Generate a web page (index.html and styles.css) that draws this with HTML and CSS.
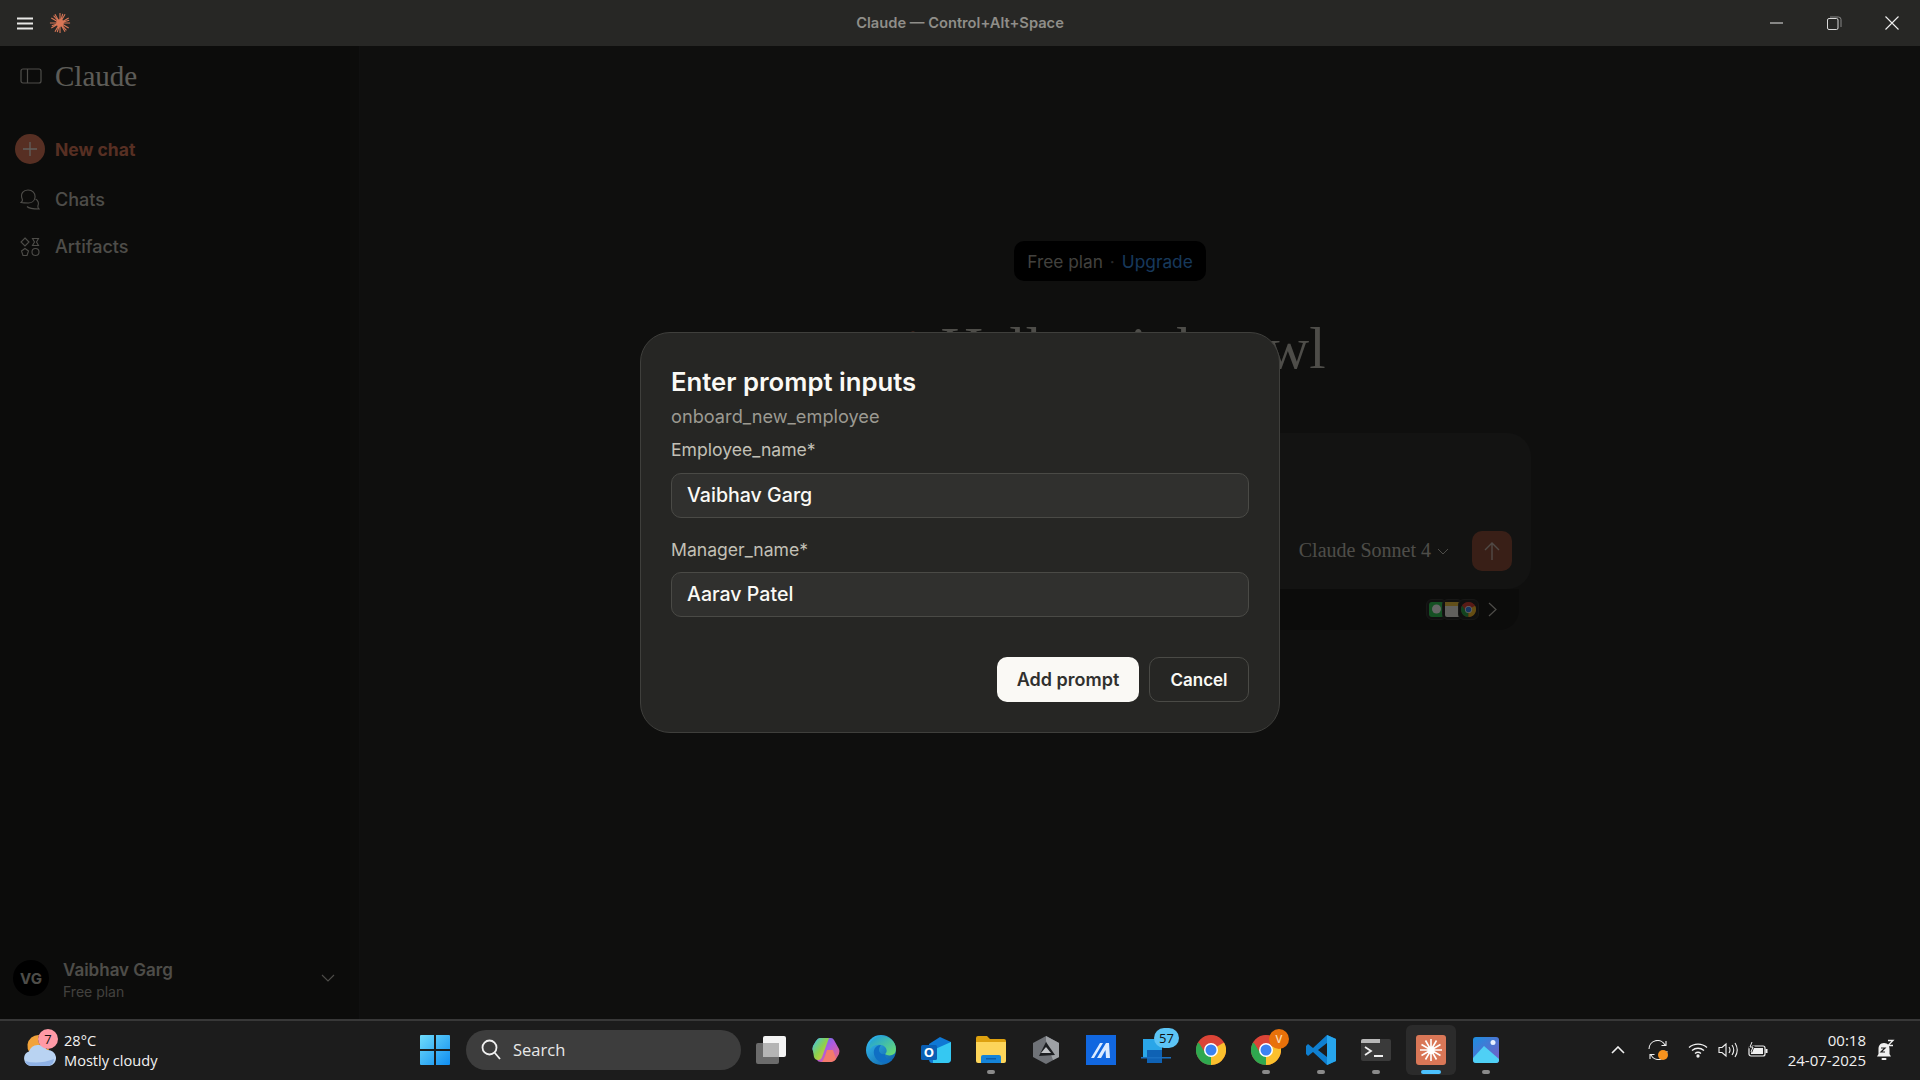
FILE: index.html
```html
<!DOCTYPE html>
<html lang="en">

<head>
    <meta charset="UTF-8">
    <title>Claude</title>
    <link rel="stylesheet" href="styles.css">
</head>

<body>
    <header class="titlebar">
        <div class="titlebar-left">
            <svg class="menu-icon" width="16" height="13" viewBox="0 0 16 13"><path d="M0 1.5H16M0 6.5H16M0 11.5H16" stroke="#e8e8e6" stroke-width="2"/></svg>
            <svg class="spark" width="22" height="22" viewBox="0 0 24 24"><path d="M12 12L12 1M12 12L17.5 2.5M12 12L21.5 6.5M12 12L23 12M12 12L21.5 17.5M12 12L17.5 21.5M12 12L12 23M12 12L6.5 21.5M12 12L2.5 17.5M12 12L1 12M12 12L2.5 6.5M12 12L6.5 2.5M12 12L15 2M12 12L22 9M12 12L19 20M12 12L9 22M12 12L3 15M12 12L5 4" stroke="#d97757" stroke-width="1.2"/><circle cx="12" cy="12" r="4" fill="#d97757"/></svg>
        </div>
        <div class="titlebar-title">Claude — Control+Alt+Space</div>
        <div class="window-controls">
            <svg width="14" height="14" viewBox="0 0 14 14"><path d="M0 7H13" stroke="#e6e6e6" stroke-width="1"/></svg>
            <svg width="15" height="15" viewBox="0 0 15 15" fill="none"><rect x="0.5" y="2.5" width="10.5" height="11" rx="1.5" stroke="#d8d8d8"/><path d="M3 1H11.5Q14 1 14 3.5V11" stroke="#888"/></svg>
            <svg width="14" height="14" viewBox="0 0 14 14"><path d="M0.5 0.5L13.5 13.5M13.5 0.5L0.5 13.5" stroke="#f0f0f0" stroke-width="1.1"/></svg>
        </div>
    </header>

    <div class="app">
        <aside class="sidebar">
            <div class="brand">
                <svg width="22" height="16" viewBox="0 0 22 16" fill="none"><rect x="1" y="1" width="20" height="14" rx="2" stroke="#c2c0b6" stroke-width="1.2"/><path d="M7.5 1V15" stroke="#c2c0b6" stroke-width="1.2"/></svg>
                <span class="brand-name">Claude</span>
            </div>
            <nav class="nav">
                <div class="nav-item new-chat">
                    <span class="plus-circle"><svg width="16" height="16" viewBox="0 0 16 16"><path d="M8 1V15M1 8H15" stroke="#f0eee6" stroke-width="1.3"/></svg></span>
                    <span>New chat</span>
                </div>
                <div class="nav-item">
                    <span class="nav-icon"><svg width="20" height="21" viewBox="0 0 20 21" fill="none" stroke="#c2c0b6" stroke-width="1.1"><path d="M1 13.5Q3 12 2.200 10C0 4.500 3.500 1 8 1C12.500 1 15.500 4 15 8.500C14.500 12 11.500 14.200 8 14C5.500 14 3.500 14 1 13.500Z"/><path d="M7 17.500C9 19.500 15 20 19 20Q17.500 18.500 18 16.500C19 14 18 11 15.500 10"/></svg></span>
                    <span>Chats</span>
                </div>
                <div class="nav-item">
                    <span class="nav-icon"><svg width="20" height="20" viewBox="0 0 20 20" fill="none" stroke="#c2c0b6" stroke-width="1.1"><path d="M5 1L9 5L5 9L1 5Z"/><path d="M12.500 1.500H18.500L16.500 5L18.500 8.500H12.500L14.500 5Z"/><path d="M5 11.500L8.500 14L7 18.500H3L1.500 14Z"/><circle cx="15.500" cy="15" r="3.500"/></svg></span>
                    <span>Artifacts</span>
                </div>
            </nav>
            <div class="account">
                <span class="avatar">VG</span>
                <div class="account-text">
                    <div class="account-name">Vaibhav Garg</div>
                    <div class="account-plan">Free plan</div>
                </div>
                <svg width="14" height="8" viewBox="0 0 14 8" fill="none"><path d="M1 1L7 7L13 1" stroke="#c2c0b6" stroke-width="1.1"/></svg>
            </div>
        </aside>

        <main class="main">
            <div class="plan-badge">Free plan <span class="dot">·</span> <span class="upgrade">Upgrade</span></div>
            <h1 class="greeting">
                <svg width="38" height="38" viewBox="0 0 24 24"><path d="M12 12L12 1M12 12L17.500 2.500M12 12L21.500 6.500M12 12L23 12M12 12L21.500 17.500M12 12L17.500 21.500M12 12L12 23M12 12L6.500 21.500M12 12L2.500 17.500M12 12L1 12M12 12L2.500 6.500M12 12L6.500 2.500" stroke="#d97757" stroke-width="1.800"/></svg>
                <span>Hello, night owl</span>
            </h1>
            <div class="composer">
                <div class="composer-row">
                    <span class="model">Claude Sonnet 4</span>
                    <svg width="12" height="7" viewBox="0 0 12 7" fill="none"><path d="M1 1L6 6L11 1" stroke="#c2c0b6"/></svg>
                    <span class="send"><svg width="16" height="20" viewBox="0 0 16 20" fill="none"><path d="M8 19V2M1 9L8 2L15 9" stroke="#c9b8b0" stroke-width="1.400"/></svg></span>
                </div>
            </div>
            <div class="tools-tray">
                <span class="tool-chips">
                    <span class="chip"><svg width="15" height="15" viewBox="0 0 15 15"><rect width="15" height="15" rx="3" fill="#34c759"/><circle cx="7.500" cy="7" r="4.500" fill="#fff"/></svg></span>
                    <span class="chip"><svg width="15" height="15" viewBox="0 0 15 15"><rect width="15" height="15" rx="2" fill="#f2f0e8"/><rect width="15" height="4" fill="#f5c542"/></svg></span>
                    <span class="chip"><svg width="15" height="15" viewBox="0 0 30 30"><circle cx="15" cy="15" r="15" fill="#db4437"/><path d="M15 15L2 7.500A15 15 0 0 0 15 30Z" fill="#2fa84f"/><path d="M15 15V30A15 15 0 0 0 28 7.500Z" fill="#fbc02d"/><path d="M2.500 7L8 16L15 8H28A15 15 0 0 0 2.500 7Z" fill="#db4437"/><circle cx="15" cy="15" r="7" fill="#fff"/><circle cx="15" cy="15" r="5.500" fill="#3b82f0"/></svg></span>
                </span>
                <svg width="9" height="15" viewBox="0 0 9 15" fill="none"><path d="M1 1L8 7.500L1 14" stroke="#c2c0b6" stroke-width="1.200"/></svg>
            </div>
        </main>

        <div class="overlay">
            <section class="modal">
                <h2 class="modal-title">Enter prompt inputs</h2>
                <div class="modal-sub">onboard_new_employee</div>
                <div class="field-label">Employee_name*</div>
                <div class="field-box">Vaibhav Garg</div>
                <div class="field-label second">Manager_name*</div>
                <div class="field-box">Aarav Patel</div>
                <div class="modal-actions">
                    <button class="btn btn-primary">Add prompt</button>
                    <button class="btn btn-ghost">Cancel</button>
                </div>
            </section>
        </div>
    </div>

    <footer class="taskbar">
        <div class="weather">
            <svg class="weather-icon" width="34" height="36" viewBox="0 0 34 36"><path d="M17 3A11 11 0 1 0 27 17A10 10 0 0 1 17 3Z" fill="#f2a33a"/><path d="M9 34A7.500 7.500 0 0 1 7 19.500A10 10 0 0 1 25 18A8 8 0 0 1 27 34Z" fill="#b9d3f2"/><path d="M9 34A7.500 7.500 0 0 1 3 29Q16 33 32 27A8 8 0 0 1 27 34Z" fill="#8fb2e6"/></svg>
            <span class="weather-badge">7</span>
            <div>
                <div class="weather-temp">28°C</div>
                <div class="weather-desc">Mostly cloudy</div>
            </div>
        </div>

        <div class="task-center">
            <svg class="win-logo" width="30" height="30" viewBox="0 0 30 30"><defs><linearGradient id="winGrad" x1="0" y1="0" x2="1" y2="1"><stop offset="0" stop-color="#6fdcfb"/><stop offset="1" stop-color="#0f8df0"/></linearGradient></defs><path d="M1 0H14V14H0V1Q0 0 1 0ZM16 0H29Q30 0 30 1V14H16ZM0 16H14V30H1Q0 30 0 29ZM16 16H30V29Q30 30 29 30H16Z" fill="url(#winGrad)"/></svg>
            <div class="search">
                <svg width="20" height="21" viewBox="0 0 20 21" fill="none"><circle cx="8.500" cy="8.500" r="7" stroke="#f0f0f0" stroke-width="1.800"/><path d="M13.500 13.500L19 20" stroke="#f0f0f0" stroke-width="1.800"/></svg>
                <span>Search</span>
            </div>
            <div class="task-icons">
                <div class="task-item">
                    <svg width="30" height="28" viewBox="0 0 30 28"><rect x="0" y="7" width="23" height="21" rx="2" fill="#6b6b6b"/><rect x="7" y="0" width="23" height="21" rx="2" fill="#f4f4f4"/><rect x="7" y="7" width="16" height="14" fill="#b5b5b5"/></svg>
                </div>
                <div class="task-item">
                    <svg width="28" height="26" viewBox="0 0 28 26"><defs><linearGradient id="copA" x1="0" y1="0" x2="1" y2="1"><stop offset="0" stop-color="#38c6f0"/><stop offset=".5" stop-color="#8fd04a"/><stop offset="1" stop-color="#f6c33c"/></linearGradient><linearGradient id="copB" x1="0" y1="0" x2="1" y2="1"><stop offset="0" stop-color="#2f7ff0"/><stop offset=".5" stop-color="#b05be0"/><stop offset="1" stop-color="#f36a6a"/></linearGradient></defs><path d="M8 1H19Q21 1 22 3L27 12Q28 14 27 17L24 22Q22 25 19 25H9Q6 25 5 23L1 14Q0 12 1 9L4 4Q6 1 8 1Z" fill="url(#copB)"/><path d="M8 1H17L10 20Q9 23 6 23Q3 23 2 20L1 14Q0 12 1 9L4 4Q6 1 8 1Z" fill="url(#copA)"/><path d="M15 13L13 19Q12 22 10 25H19Q22 25 24 22L21 13Z" fill="#f47b6c"/></svg>
                </div>
                <div class="task-item">
                    <svg width="30" height="30" viewBox="0 0 30 30"><defs><linearGradient id="edgeA" x1="0" y1="0" x2="1" y2="1"><stop offset="0" stop-color="#35c1f1"/><stop offset="1" stop-color="#0c59a4"/></linearGradient><linearGradient id="edgeB" x1="0" y1="0" x2="1" y2="1"><stop offset="0" stop-color="#1b9de2"/><stop offset="1" stop-color="#6fe06a"/></linearGradient></defs><circle cx="15" cy="15" r="15" fill="url(#edgeA)"/><path d="M4 8C8 1 18-1 25 4C30 8 31 14 29 18C27 21 21 21 19 19C22 17 21 11 15 10C10 9 6 11 4 14Z" fill="url(#edgeB)"/><path d="M19 19C16 20 13 18 13 15C13 13 14 11 15 10C9 10 6 16 9 22C12 28 21 30 26 25C22 25 19 23 19 19Z" fill="#0f6fc4"/></svg>
                </div>
                <div class="task-item">
                    <svg width="30" height="26" viewBox="0 0 30 26"><path d="M8 7L19 0L30 5V22Q30 26 26 26H11Q8 26 8 22Z" fill="#0f78d4"/><path d="M12 13L30 5V22Q30 26 26 26H12Z" fill="#35c8f2"/><rect x="0" y="8" width="16" height="15" rx="1.500" fill="#0a5fb4"/><text class="outlook-o" x="8" y="20" text-anchor="middle">O</text></svg>
                </div>
                <div class="task-item has-dot">
                    <svg width="30" height="27" viewBox="0 0 30 27"><path d="M0 2Q0 0 2 0H11L14 3H28Q30 3 30 5V10H0Z" fill="#dea10f"/><path d="M0 6H30V25Q30 27 28 27H2Q0 27 0 25Z" fill="#fdd55a"/><path d="M5 24V21Q5 19 7 19H23Q25 19 25 21V27H5Z" fill="#1584d8"/><rect x="10" y="22" width="10" height="1.500" fill="#0d5da8"/></svg>
                </div>
                <div class="task-item">
                    <svg width="26" height="28" viewBox="0 0 26 28"><path d="M13 0L26 7V21L13 28L0 21V7Z" fill="#6f7277"/><path d="M13 0L26 7V21L20 24L13 5Z" fill="#9ea1a5"/><path d="M13 6L22 19L6 20Z" fill="#1d1f22"/><path d="M13 11L18 17H8Z" fill="#c4c6c9"/></svg>
                </div>
                <div class="task-item">
                    <svg width="30" height="30" viewBox="0 0 30 30"><rect width="30" height="30" fill="#1167e0"/><path d="M5 23L14 8H17L8 23ZM11 23L20 8H23L24 23H20L19.500 15L15 23Z" fill="#dcebff"/></svg>
                </div>
                <div class="task-item">
                    <svg width="30" height="27" viewBox="0 0 30 27"><rect x="2" y="3" width="19" height="19" fill="#2aa6e8"/><rect x="6" y="14" width="15" height="13" fill="#0f62b4"/><rect x="0" y="21" width="30" height="1.500" fill="#1a6fc0"/></svg>
                    <span class="count-badge">57</span>
                </div>
                <div class="task-item">
                    <svg width="30" height="30" viewBox="0 0 30 30"><circle cx="15" cy="15" r="15" fill="#db4437"/><path d="M15 15L2 7.500A15 15 0 0 0 15 30Z" fill="#2fa84f"/><path d="M15 15V30A15 15 0 0 0 28 7.500Z" fill="#fbc02d"/><path d="M2.500 7L8 16L15 8H28A15 15 0 0 0 2.500 7Z" fill="#db4437"/><circle cx="15" cy="15" r="7" fill="#fff"/><circle cx="15" cy="15" r="5.500" fill="#3b82f0"/></svg>
                </div>
                <div class="task-item has-dot">
                    <svg width="30" height="30" viewBox="0 0 30 30"><circle cx="15" cy="15" r="15" fill="#db4437"/><path d="M15 15L2 7.500A15 15 0 0 0 15 30Z" fill="#2fa84f"/><path d="M15 15V30A15 15 0 0 0 28 7.500Z" fill="#fbc02d"/><path d="M2.500 7L8 16L15 8H28A15 15 0 0 0 2.500 7Z" fill="#db4437"/><circle cx="15" cy="15" r="7" fill="#fff"/><circle cx="15" cy="15" r="5.500" fill="#3b82f0"/></svg>
                    <span class="profile-badge">V</span>
                </div>
                <div class="task-item has-dot">
                    <svg width="30" height="30" viewBox="0 0 30 30"><path d="M21 0L30 4V26L21 30L7 17L2 21L0 19V11L2 9L7 13Z" fill="#0f7fd0"/><path d="M21 0L30 4V26L21 30Z" fill="#27a5ec"/><path d="M21 8L12 15L21 22Z" fill="#1c1c1c"/></svg>
                </div>
                <div class="task-item has-dot">
                    <svg width="30" height="22" viewBox="0 0 30 22"><rect width="30" height="22" rx="2" fill="#3a3a3a"/><path d="M2 0H19V4H0V2Q0 0 2 0Z" fill="#b8b8b8"/><path d="M4 8L10 12L4 16" fill="none" stroke="#f0f0f0" stroke-width="1.800"/><rect x="13" y="16" width="9" height="2" fill="#f0f0f0"/></svg>
                </div>
                <div class="task-item active">
                    <svg width="30" height="30" viewBox="0 0 30 30"><rect width="30" height="30" rx="3" fill="#d97757"/><path d="M15 15L15 4M15 15L20.500 5.500M15 15L24.500 9.500M15 15L26 15M15 15L24.500 20.500M15 15L20.500 24.500M15 15L15 26M15 15L9.500 24.500M15 15L5.500 20.500M15 15L4 15M15 15L5.500 9.500M15 15L9.500 5.500" stroke="#fff" stroke-width="1.600"/><circle cx="15" cy="15" r="3.500" fill="#fff"/></svg>
                </div>
                <div class="task-item has-dot">
                    <svg width="26" height="26" viewBox="0 0 26 26"><defs><linearGradient id="photoBg" x1="0" y1="0" x2="1" y2="1"><stop offset="0" stop-color="#1b8fe0"/><stop offset="1" stop-color="#7a5cc4"/></linearGradient></defs><rect width="26" height="26" rx="3" fill="url(#photoBg)"/><path d="M0 21L11 9L26 22V23Q26 26 23 26H3Q0 26 0 23Z" fill="#4fd0f5"/><circle cx="20" cy="5.500" r="2.500" fill="#e8f0ff"/></svg>
                </div>
            </div>
        </div>

        <div class="tray">
            <svg class="tray-caret" width="14" height="8" viewBox="0 0 14 8" fill="none"><path d="M1 7L7 1L13 7" stroke="#f0f0f0" stroke-width="1.600"/></svg>
            <span class="sync">
                <svg width="20" height="20" viewBox="0 0 20 20" fill="none" stroke="#eee" stroke-width="1.100"><path d="M1 9A8.500 8.500 0 0 1 17 5M18 1V5.500H13.500"/><path d="M19 11A8.500 8.500 0 0 1 3 15M2 19V14.500H6.500"/></svg>
                <span class="sync-dot"></span>
            </span>
            <svg class="tray-wifi" width="20" height="16" viewBox="0 0 20 16" fill="none" stroke="#f0f0f0" stroke-width="1.300"><path d="M1 5.500C6 1 14 1 19 5.500M4 8.500C7.500 5.500 12.500 5.500 16 8.500M7 11.500C8.800 10 11.200 10 13 11.500"/><circle cx="10" cy="14" r="1" fill="#f0f0f0"/></svg>
            <svg class="tray-vol" width="20" height="16" viewBox="0 0 20 16" fill="none" stroke="#f0f0f0" stroke-width="1.100"><path d="M1 5.500H4L8 2V14L4 10.500H1Z"/><path d="M11 5Q13 8 11 11M14 3Q17.500 8 14 13M17 1Q21.500 8 17 15"/></svg>
            <svg class="tray-batt" width="20" height="16" viewBox="0 0 20 16"><rect x="1" y="4" width="16" height="10" rx="2" fill="none" stroke="#f0f0f0" stroke-width="1.200"/><rect x="3" y="6" width="12" height="6" fill="#f0f0f0"/><rect x="17.500" y="7" width="2" height="4" fill="#f0f0f0"/><path d="M4 0L2 5H5L3 10" fill="none" stroke="#1c1c1c" stroke-width="2.500"/><path d="M4 0L2 5H5L3 10" fill="none" stroke="#f0f0f0" stroke-width="1"/></svg>
            <div class="clock">
                <div>00:18</div>
                <div>24-07-2025</div>
            </div>
            <svg class="tray-bell" width="19" height="22" viewBox="0 0 19 22"><path d="M8 4C4 4 2.500 7 2.500 10V15L1 17.500H15L13.500 15V10C13.500 7 12 4 8 4Z" fill="#f0f0f0"/><rect x="5.500" y="19" width="5" height="2" rx="1" fill="#f0f0f0"/><path d="M5 9H9L5 13H9" fill="none" stroke="#1c1c1c" stroke-width="1.200"/><path d="M12 1.500H17L12 6.500H17" fill="none" stroke="#f0f0f0" stroke-width="1.300"/></svg>
        </div>
    </footer>
</body>

</html>
```

FILE: styles.css
```css
* {
    box-sizing: border-box;
}

html,
body {
    height: 100%;
}

body {
    margin: 0;
    display: flex;
    flex-direction: column;
    width: 1920px;
    height: 1080px;
    overflow: hidden;
    font-family: Inter, "Noto Sans", sans-serif;
    background: #262624;
    color: #f0eee6;
}

/* title bar */
.titlebar {
    height: 46px;
    flex: none;
    background: #272725;
    position: relative;
    display: flex;
    align-items: center;
    justify-content: space-between;
}

.titlebar-left {
    display: flex;
    align-items: center;
    padding-left: 17px;
    gap: 16px;
}

.titlebar-title {
    position: absolute;
    left: 0;
    right: 0;
    text-align: center;
    font-size: 14.7px;
    font-weight: 600;
    color: #8f8e89;
}

.window-controls {
    display: flex;
    align-items: center;
    gap: 43px;
    padding-right: 21px;
}

/* app body */
.app {
    flex: 1;
    display: flex;
    position: relative;
    min-height: 0;
}

.sidebar {
    width: 360px;
    flex: none;
    background: #1f1e1d;
    border-right: 1px solid #2a2a28;
    display: flex;
    flex-direction: column;
}

.brand {
    display: flex;
    align-items: center;
    gap: 13px;
    height: 30px;
    margin: 15px 0 0 20px;
}

.brand-name {
    font-family: "Liberation Serif", serif;
    font-size: 29px;
    color: #e8e6dc;
}

.nav {
    margin-top: 43px;
}

.nav-item {
    display: flex;
    align-items: center;
    gap: 12px;
    height: 47px;
    padding-left: 17px;
    font-size: 18px;
    font-weight: 500;
    color: #c2c0b6;
}

.nav-item.new-chat {
    height: 30px;
    margin-bottom: 12px;
    padding-left: 15px;
    gap: 10px;
    font-size: 17.5px;
    font-weight: 700;
    color: #d97757;
}

.plus-circle {
    width: 30px;
    height: 30px;
    border-radius: 50%;
    background: #d97757;
    display: flex;
    align-items: center;
    justify-content: center;
}

.nav-icon {
    width: 26px;
    display: flex;
    justify-content: center;
}

.account {
    margin-top: auto;
    display: flex;
    align-items: center;
    height: 40px;
    margin-bottom: 21px;
    padding: 0 24px 0 13px;
}

.avatar {
    width: 36px;
    height: 36px;
    border-radius: 50%;
    background: #000;
    color: #c2c0b6;
    font-size: 15px;
    font-weight: 700;
    display: flex;
    align-items: center;
    justify-content: center;
    margin-right: 14px;
}

.account-text {
    flex: 1;
    position: relative;
    top: 3px;
}

.account-name {
    font-size: 17px;
    font-weight: 600;
    color: #c2c0b6;
    line-height: 22px;
}

.account-plan {
    font-size: 14px;
    color: #a6a49b;
    line-height: 22px;
}

/* main, dimmed behind the dialog */
.main {
    flex: 1;
    display: flex;
    flex-direction: column;
    align-items: center;
    padding: 195px 60px 0 0;
    background: #262624;
}

.plan-badge {
    height: 40px;
    width: 192px;
    display: flex;
    align-items: center;
    justify-content: center;
    gap: 7px;
    border-radius: 10px;
    background: #000;
    font-size: 17.3px;
    color: #a6a49b;
}

.dot {
    color: #666;
}

.upgrade {
    color: #3b8ee0;
}

.greeting {
    margin: 32px 0 0;
    display: flex;
    align-items: center;
    gap: 8px;
    height: 71px;
    font-family: "Liberation Serif", serif;
    font-size: 59px;
    font-weight: 400;
    color: #c2c0b6;
}

.composer {
    margin-top: 49px;
    width: 842px;
    height: 156px;
    border-radius: 24px;
    background: #30302e;
    position: relative;
    z-index: 1;
    display: flex;
    align-items: flex-end;
    justify-content: flex-end;
    padding: 0 19px 18px 0;
}

.composer-row {
    display: flex;
    align-items: center;
}

.model {
    font-family: "Liberation Serif", serif;
    font-size: 20px;
    color: #c2c0b6;
    margin-right: 6px;
    position: relative;
    top: -1px;
}

.send {
    width: 40px;
    height: 40px;
    border-radius: 10px;
    background: #8f4f3b;
    margin-left: 23px;
    display: flex;
    align-items: center;
    justify-content: center;
}

.tools-tray {
    width: 818px;
    height: 41px;
    border-radius: 0 0 20px 20px;
    background: #1f1e1d;
    display: flex;
    align-items: center;
    justify-content: flex-end;
    gap: 9px;
    padding-right: 22px;
}

.tool-chips {
    display: flex;
}

.chip {
    width: 21px;
    height: 21px;
    margin-left: -5px;
    border-radius: 6px;
    background: #2a2a28;
    border: 1px solid #3a3a38;
    display: flex;
    align-items: center;
    justify-content: center;
}

.overlay {
    position: absolute;
    inset: 0;
    background: rgba(0, 0, 0, 0.6);
    display: flex;
    align-items: center;
    justify-content: center;
    z-index: 2;
}

/* dialog */
.modal {
    width: 640px;
    height: 401px;
    background: #262624;
    border: 1px solid #3f3f3c;
    border-radius: 30px;
    padding: 34px 30px 30px;
    display: flex;
    flex-direction: column;
}

.modal-title {
    margin: 0;
    font-size: 25.7px;
    line-height: 30px;
    font-weight: 600;
    color: #faf9f5;
}

.modal-sub {
    margin-top: 7px;
    font-size: 18.2px;
    line-height: 24px;
    color: #9c9a92;
}

.field-label {
    margin-top: 10px;
    font-size: 17.6px;
    line-height: 24px;
    color: #c2c0b6;
}

.field-label.second {
    margin-top: 20px;
}

.field-box {
    margin-top: 11px;
    height: 45px;
    line-height: 43px;
    padding: 0 15px;
    background: #30302e;
    border: 1px solid #4a4a46;
    border-radius: 10px;
    font-size: 19.6px;
    font-weight: 500;
    color: #faf9f5;
}

.field-label.second + .field-box {
    margin-top: 10px;
}

.modal-actions {
    margin-top: 40px;
    display: flex;
    justify-content: flex-end;
    gap: 10px;
}

.btn {
    height: 45px;
    border-radius: 10px;
    font-family: inherit;
    font-size: 18px;
    font-weight: 600;
    padding: 0;
}

.btn-primary {
    width: 142px;
    background: #faf9f5;
    border: none;
    color: #30302e;
}

.btn-ghost {
    width: 100px;
    background: transparent;
    border: 1px solid #4a4a46;
    font-size: 17px;
    color: #faf9f5;
}

/* taskbar */
.taskbar {
    height: 61px;
    flex: none;
    background: #1c1c1c;
    border-top: 2px solid #383838;
    padding-bottom: 2px;
    position: relative;
    display: flex;
    align-items: center;
    font-family: "Open Sans", "Noto Sans", sans-serif;
}

.weather {
    display: flex;
    align-items: center;
    width: 420px;
    padding-left: 22px;
    position: relative;
}

.weather-icon {
    margin-right: 8px;
}

.weather-badge {
    position: absolute;
    left: 38px;
    top: -1px;
    width: 20px;
    height: 20px;
    border-radius: 50%;
    background: #ff9aa6;
    color: #111;
    font-size: 13px;
    text-align: center;
    line-height: 20px;
}

.weather-temp,
.weather-desc {
    font-size: 14.6px;
    line-height: 20px;
    color: #f2f2f2;
}

.task-center {
    display: flex;
    align-items: center;
}

.win-logo {
    flex: none;
}

.search {
    width: 275px;
    height: 40px;
    margin-left: 16px;
    border-radius: 20px;
    background: #3d3d3d;
    display: flex;
    align-items: center;
    gap: 12px;
    padding-left: 15px;
    font-size: 16.5px;
    color: #e8e8e8;
}

.task-icons {
    display: flex;
    margin-left: 2px;
}

.task-item {
    width: 55px;
    height: 50px;
    position: relative;
    display: flex;
    align-items: center;
    justify-content: center;
}

.task-item.has-dot::after,
.task-item.active::after {
    content: "";
    position: absolute;
    left: 50%;
    bottom: 1px;
    width: 8px;
    height: 4px;
    margin-left: -4px;
    border-radius: 2px;
    background: #8a8a8a;
}

.task-item.active {
    width: 50px;
    margin: 0 2.5px;
    background: #2b2b2b;
    border-radius: 6px;
}

.task-item.active::after {
    width: 20px;
    margin-left: -10px;
    background: #4cc2ff;
}

.count-badge {
    position: absolute;
    left: 26px;
    top: 3px;
    width: 25px;
    height: 20px;
    border-radius: 10px;
    background: #5cc4f5;
    color: #111;
    font-size: 13px;
    text-align: center;
    line-height: 20px;
}

.profile-badge {
    position: absolute;
    left: 31px;
    top: 4px;
    width: 20px;
    height: 20px;
    border-radius: 50%;
    background: #e8710a;
    color: #fbd9b0;
    font-size: 11px;
    font-weight: 600;
    text-align: center;
    line-height: 20px;
}

.outlook-o {
    font-size: 13px;
    font-weight: 700;
    fill: #fff;
}

.tray {
    position: absolute;
    left: 1611px;
    top: 0;
    bottom: 2px;
    display: flex;
    align-items: center;
}

.tray-caret {
    margin-right: 23px;
}

.sync {
    position: relative;
    width: 20px;
    height: 20px;
    margin-right: 20px;
}

.sync-dot {
    position: absolute;
    left: 10px;
    top: 10px;
    width: 10px;
    height: 10px;
    border-radius: 50%;
    background: #f7931e;
}

.tray-wifi,
.tray-vol {
    margin-right: 10px;
}

.clock {
    width: 108px;
    margin-left: -10px;
    text-align: right;
    font-size: 15px;
    line-height: 20px;
    color: #f0f0f0;
}

.tray-bell {
    margin-left: 10px;
}
```
